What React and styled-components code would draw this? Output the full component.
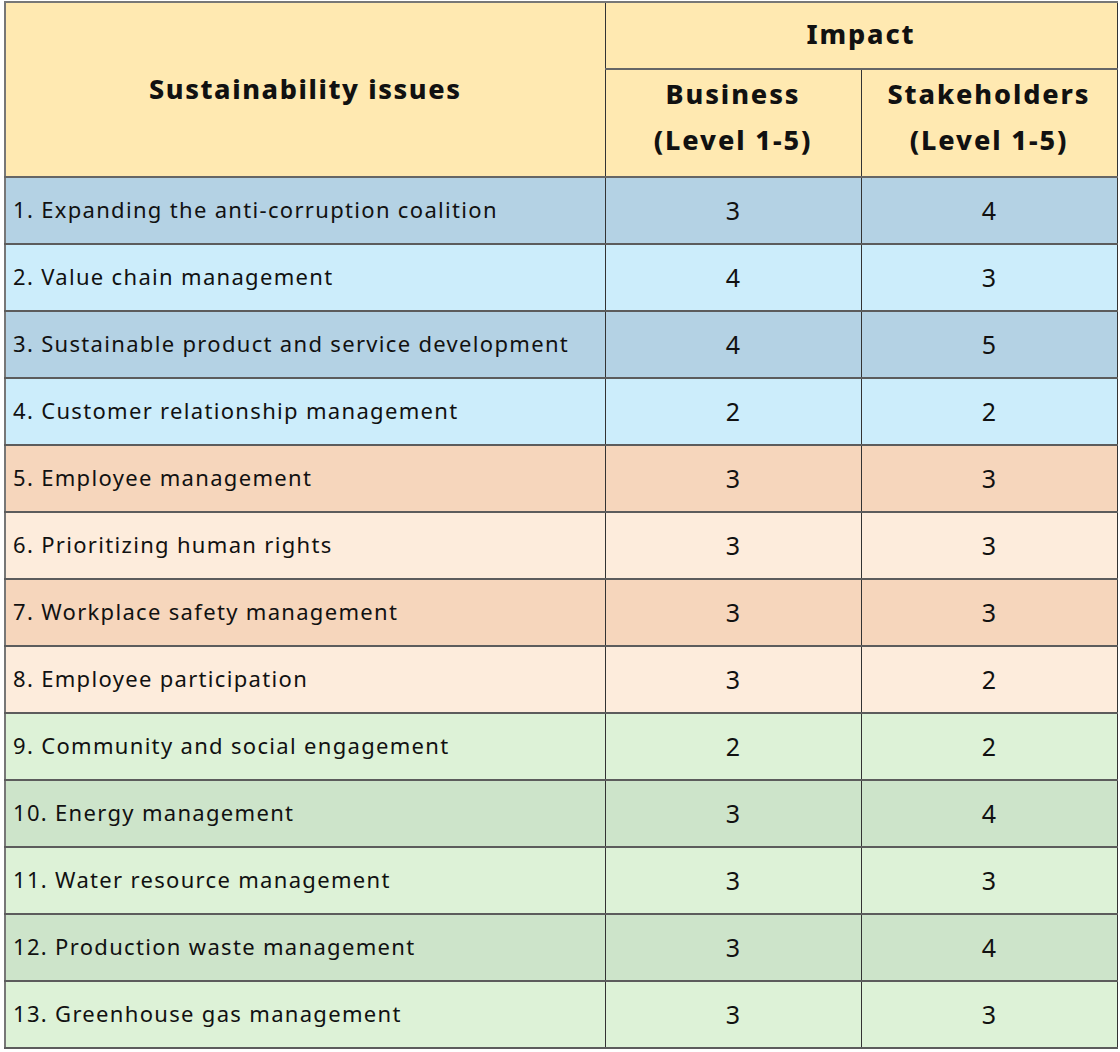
import React from "react";
import styled, { createGlobalStyle } from "styled-components";

const GlobalStyle = createGlobalStyle`
  html, body {
    margin: 0;
    padding: 0;
    background: #ffffff;
  }
  body {
    font-family: "Noto Sans", "Open Sans", sans-serif;
    color: #111;
  }
`;

const palette = {
  header: "#ffe9b1",
  blueDark: "#b4d2e4",
  blueLight: "#ccedfb",
  peachDark: "#f6d6bc",
  peachLight: "#fdecdc",
  greenLight: "#ddf2d7",
  greenDark: "#cde4ca",
};

const issues = [
  { name: "1. Expanding the anti-corruption coalition", business: 3, stake: 4, tone: "blueDark" },
  { name: "2. Value chain management", business: 4, stake: 3, tone: "blueLight" },
  { name: "3. Sustainable product and service development", business: 4, stake: 5, tone: "blueDark" },
  { name: "4. Customer relationship management", business: 2, stake: 2, tone: "blueLight" },
  { name: "5. Employee management", business: 3, stake: 3, tone: "peachDark" },
  { name: "6. Prioritizing human rights", business: 3, stake: 3, tone: "peachLight" },
  { name: "7. Workplace safety management", business: 3, stake: 3, tone: "peachDark" },
  { name: "8. Employee participation", business: 3, stake: 2, tone: "peachLight" },
  { name: "9. Community and social engagement", business: 2, stake: 2, tone: "greenLight" },
  { name: "10. Energy management", business: 3, stake: 4, tone: "greenDark" },
  { name: "11. Water resource management", business: 3, stake: 3, tone: "greenLight" },
  { name: "12. Production waste management", business: 3, stake: 4, tone: "greenDark" },
  { name: "13. Greenhouse gas management", business: 3, stake: 3, tone: "greenLight" },
];

const Wrap = styled.div`
  padding: 1px 4px 0 4px;
`;

const Table = styled.table`
  width: 1112px;
  border-collapse: collapse;
  table-layout: fixed;
  border-top: 2px solid #777;
  border-left: 2px solid #777;
  border-right: 1px solid #222;
  border-bottom: 2px solid #777;
`;

const HeadCell = styled.th`
  background: ${palette.header};
  font-weight: 800;
  font-size: 27px;
  letter-spacing: ${(p) => p.$spacing || "1.6px"};
  line-height: 46px;
  text-align: center;
  vertical-align: middle;
  padding: ${(p) => p.$pad || "0"};
  height: ${(p) => p.$h || "auto"};
  border-right: 1px solid #333;
  border-bottom: 2px solid #666;
`;

const Row = styled.tr`
  background: ${(p) => palette[p.$tone]};
  height: 67px;
`;

const IssueCell = styled.td`
  font-size: 22px;
  letter-spacing: 1.32px;
  padding: 0 0 3px 7px;
  border-right: 1px solid #333;
  border-bottom: 2px solid #5c5c5c;
  white-space: nowrap;
`;

const ScoreCell = styled.td`
  font-size: 25px;
  text-align: center;
  padding: 0 0 1px;
  border-right: 1px solid #333;
  border-bottom: 2px solid #5c5c5c;
`;

export default function App() {
  return (
    <>
      <GlobalStyle />
      <Wrap>
        <Table>
          <colgroup>
            <col style={{ width: 600 }} />
            <col style={{ width: 256 }} />
            <col style={{ width: 256 }} />
          </colgroup>
          <thead>
            <tr>
              <HeadCell rowSpan={2} $pad="0 0 2px">
                Sustainability issues
              </HeadCell>
              <HeadCell colSpan={2} $h="62px" $spacing="1.9px" $pad="0 0 3px">
                Impact
              </HeadCell>
            </tr>
            <tr>
              <HeadCell $h="94px" $spacing="1.9px" $pad="0 0 12px">
                Business
                <br />
                (Level 1-5)
              </HeadCell>
              <HeadCell $h="94px" $spacing="1.9px" $pad="0 0 12px">
                Stakeholders
                <br />
                (Level 1-5)
              </HeadCell>
            </tr>
          </thead>
          <tbody>
            {issues.map((item) => (
              <Row key={item.name} $tone={item.tone}>
                <IssueCell>{item.name}</IssueCell>
                <ScoreCell>{item.business}</ScoreCell>
                <ScoreCell>{item.stake}</ScoreCell>
              </Row>
            ))}
          </tbody>
        </Table>
      </Wrap>
    </>
  );
}
